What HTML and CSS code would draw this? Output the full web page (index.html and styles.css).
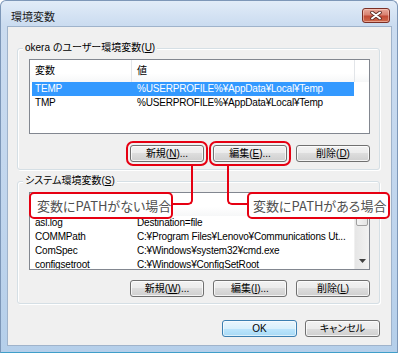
FILE: index.html
```html
<!DOCTYPE html>
<html lang="ja">
<head>
<meta charset="utf-8">
<title>環境変数</title>
<link rel="stylesheet" href="styles.css">
</head>
<body>
<div class="window">
  <div class="titlebar">
    <span class="title">環境変数</span>
    <span class="close">
      <svg width="12" height="9" viewBox="0 0 12 9">
        <path d="M2 1.5 L10 7.5 M10 1.5 L2 7.5" stroke="#5a2a22" stroke-width="3.6" stroke-linecap="round" fill="none"/>
        <path d="M2 1.5 L10 7.5 M10 1.5 L2 7.5" stroke="#ffffff" stroke-width="2" stroke-linecap="round" fill="none"/>
      </svg>
    </span>
  </div>
  <div class="client">
    <div class="group">
      <div class="group-label">okera のユーザー環境変数(<u>U</u>)</div>
      <div class="lv lv1">
        <div class="lv-main">
          <div class="lv-head"><span class="h1">変数</span><span class="h2">値</span><span class="h3"></span></div>
          <div class="lv-row sel"><span class="c1">TEMP</span><span class="c2">%USERPROFILE%¥AppData¥Local¥Temp</span></div>
          <div class="lv-row"><span class="c1">TMP</span><span class="c2">%USERPROFILE%¥AppData¥Local¥Temp</span></div>
        </div>
      </div>
      <div class="btn-row">
        <button class="btn mark">新規(<u>N</u>)...</button>
        <button class="btn mark">編集(<u>E</u>)...</button>
        <button class="btn">削除(<u>D</u>)</button>
      </div>
    </div>

    <div class="group g2">
      <div class="group-label">システム環境変数(<u>S</u>)</div>
      <div class="lv lv2">
        <div class="lv-main">
          <div class="lv-head"><span class="h1">変数</span><span class="h2">値</span><span class="h3"></span></div>
          <div class="lv-row"><span class="c1">asl.log</span><span class="c2">Destination=file</span></div>
          <div class="lv-row"><span class="c1">COMMPath</span><span class="c2">C:¥Program Files¥Lenovo¥Communications Ut...</span></div>
          <div class="lv-row"><span class="c1">ComSpec</span><span class="c2">C:¥Windows¥system32¥cmd.exe</span></div>
          <div class="lv-row"><span class="c1">configsetroot</span><span class="c2">C:¥Windows¥ConfigSetRoot</span></div>
        </div>
        <div class="sb">
          <div class="sb-btn"><svg width="7" height="4" viewBox="0 0 7 4"><path d="M0 4 L3.5 0 L7 4 Z" fill="#404040"/></svg></div>
          <div class="sb-thumb"></div>
          <div class="sb-track"></div>
          <div class="sb-btn"><svg width="7" height="4" viewBox="0 0 7 4"><path d="M0 0 L3.5 4 L7 0 Z" fill="#404040"/></svg></div>
        </div>
      </div>
      <div class="btn-row">
        <button class="btn">新規(<u>W</u>)...</button>
        <button class="btn">編集(<u>I</u>)...</button>
        <button class="btn">削除(<u>L</u>)</button>
      </div>
    </div>

    <div class="dlg-row">
      <button class="btn default">OK</button>
      <button class="btn">キャンセル</button>
    </div>

    <div class="connector left"></div>
    <div class="connector right"></div>
    <div class="callout c-left">変数にPATHがない場合</div>
    <div class="callout c-right">変数にPATHがある場合</div>
  </div>
</div>
</body>
</html>
```

FILE: styles.css
```css
* { box-sizing: border-box; }
html, body { margin: 0; padding: 0; }
body {
  width: 398px;
  height: 353px;
  overflow: hidden;
  background: #ffffff;
  font-family: "Liberation Sans", "Noto Sans CJK JP", sans-serif;
  font-feature-settings: "palt";
  color: #000;
}

.window {
  width: 398px;
  height: 353px;
  display: flex;
  flex-direction: column;
  border: 1px solid #7d97b8;
  border-bottom-color: #3f9ec9;
  border-radius: 6px 6px 0 0;
  background: linear-gradient(180deg, #e1ecf8 0, #cbdcf0 24px, #c0d5ed 60%, #b5cfea 100%);
  padding: 0 5px 6px 6px;
}

.titlebar {
  height: 25px;
  display: flex;
  align-items: flex-start;
  justify-content: space-between;
  flex: none;
}
.title {
  font-family: "Noto Sans CJK JP", sans-serif;
  font-size: 11px;
  line-height: 16px;
  margin: 7px 0 0 4px;
  color: #1a1a1a;
}
.close {
  width: 28px;
  height: 15px;
  margin: 7px 2px 0 0;
  border: 1px solid #7b2f25;
  border-radius: 3px;
  background: linear-gradient(180deg, #e9a99b 0, #d88271 45%, #c24a36 55%, #cf6b4c 100%);
  box-shadow: inset 0 0 0 1px rgba(255, 220, 210, 0.5);
  display: flex;
  align-items: center;
  justify-content: center;
}

.client {
  flex: 1;
  position: relative;
  background: #f0f0f0;
  border: 1px solid #9fb3cb;
  padding: 21px 11px 0 9px;
  font-size: 10px;
}

.group {
  border: 1px solid #d5dfe5;
  border-radius: 3px;
  box-shadow: inset 1px 1px 0 #ffffff, 1px 1px 0 #ffffff;
  padding: 0 9px 7px 11px;
}
.g2 { margin-top: 11px; padding-bottom: 6px; }
.group-label {
  width: max-content;
  margin: -8px 0 0 -6px;
  padding: 0 2px;
  background: #f0f0f0;
  line-height: 14px;
  height: 14px;
  font-size: 10px;
  color: #000;
}

.lv {
  margin-top: 4px;
  background: #ffffff;
  border: 1px solid #828790;
  display: flex;
  overflow: hidden;
}
.lv1 { height: 75px; }
.lv2 { height: 78px; }
.lv-main { flex: 1; overflow: hidden; }

.lv-head {
  display: flex;
  height: 22px;
  line-height: 22px;
  background: linear-gradient(180deg, #ffffff 0, #ffffff 60%, #f6f7f8 100%);
}
.lv2 .lv-head { height: 23px; }
.lv-head span { border-right: 1px solid #e2e5e9; }
.h1 { width: 102px; padding-left: 5px; }
.h2 { width: 223px; padding-left: 5px; }
.h3 { flex: 1; border-right: none !important; }

.lv-row {
  display: flex;
  width: 322px;
  margin-left: 2px;
  height: 14px;
  line-height: 14px;
  letter-spacing: -0.2px;
  white-space: nowrap;
}
.lv-row .c1 { width: 100px; padding-left: 3px; }
.lv-row .c2 { width: 222px; padding-left: 5px; }
.lv-row.sel { background: #3399ff; color: #ffffff; }

.sb {
  width: 15px;
  display: flex;
  flex-direction: column;
  background: linear-gradient(90deg, #e6e6e6 0, #f2f2f2 100%);
  border-left: 1px solid #f0f0f0;
}
.sb-btn {
  height: 17px;
  display: flex;
  align-items: center;
  justify-content: center;
}
.sb-thumb {
  height: 16px;
  margin: 0 1px;
  border: 1px solid #a0a0a0;
  border-radius: 2px;
  background: linear-gradient(90deg, #f4f4f4 0, #e4e4e4 100%);
}
.sb-track { flex: 1; }

.btn-row {
  display: flex;
  justify-content: flex-end;
  gap: 9px;
  margin-top: 11px;
}
.g2 .btn-row { margin-top: 10px; }

.btn {
  width: 74px;
  height: 17px;
  padding: 0;
  border: 1px solid #707070;
  border-radius: 3px;
  background: linear-gradient(180deg, #f2f2f2 0, #ebebeb 50%, #dddddd 50%, #cfcfcf 100%);
  box-shadow: inset 0 0 0 1px rgba(255, 255, 255, 0.75);
  font-family: "Liberation Sans", "Noto Sans CJK JP", sans-serif;
  font-feature-settings: "palt";
  font-size: 10px;
  line-height: 15px;
  color: #000;
}
.btn.mark {
  outline: 2px solid #e60012;
  outline-offset: 2px;
}
.btn.default {
  border-color: #3c7fb1;
  background: linear-gradient(180deg, #eaf6fd 0, #d9f0fc 50%, #bee6fd 50%, #a7d9f5 100%);
  box-shadow: inset 0 0 0 1px rgba(255, 255, 255, 0.6);
}

.dlg-row {
  display: flex;
  justify-content: flex-end;
  gap: 8px;
  margin-top: 16px;
}
.dlg-row .btn { width: 75px; }

.connector {
  position: absolute;
  top: 137px;
  width: 21px;
  height: 41px;
  border-bottom: 2px solid #e60012;
}
.connector.left {
  left: 164px;
  border-right: 2px solid #e60012;
  border-bottom-right-radius: 5px;
}
.connector.right {
  left: 219px;
  border-left: 2px solid #e60012;
  border-bottom-left-radius: 5px;
}

.callout {
  position: absolute;
  top: 165px;
  height: 27px;
  border: 2px solid #e60012;
  border-radius: 5px;
  background: #ffffff;
  font-family: "Noto Sans CJK JP", sans-serif;
  font-size: 13px;
  line-height: 23px;
  color: #505050;
  padding-left: 6px;
  white-space: nowrap;
}
.c-left { left: 21px; width: 144px; }
.c-right { left: 239px; width: 143px; padding-left: 4px; }
```
